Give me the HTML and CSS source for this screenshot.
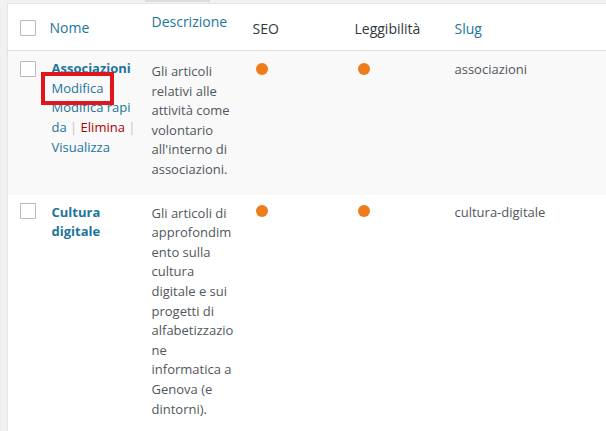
FILE: index.html
```html
<!DOCTYPE html>
<html lang="it">
<head>
<meta charset="utf-8">
<title>Categorie</title>
<link rel="stylesheet" href="styles.css">
</head>
<body>
<div class="topbar"><span class="tab-edge"></span></div>
<div class="wrap">
  <table class="list">
    <colgroup>
      <col class="c-check"><col class="c-name"><col class="c-desc"><col class="c-seo"><col class="c-read"><col class="c-slug">
    </colgroup>
    <thead>
      <tr class="head">
        <th class="check"><span class="box"></span></th>
        <th class="h-name"><a href="#">Nome</a></th>
        <th class="h-desc"><a href="#">Descrizione</a></th>
        <th class="h-seo">SEO</th>
        <th class="h-read">Leggibilità</th>
        <th class="h-slug"><a href="#">Slug</a></th>
      </tr>
    </thead>
    <tbody>
      <tr class="alt r1">
        <td class="check"><span class="box"></span></td>
        <td class="name">
          <a class="title" href="#">Associazioni</a>
          <div class="actions">
            <span class="edit-wrap"><a href="#">Modifica</a><span class="sep"> | </span><span class="mark"></span></span><a href="#">Modifica&nbsp;rapida</a><span class="sep"> | </span><a class="del" href="#">Elimina</a><span class="sep"> | </span><a href="#">Visualizza</a>
          </div>
        </td>
        <td class="desc">Gli articoli relativi alle attività come volontario all'interno di associazioni.</td>
        <td class="seo"><span class="dot"></span></td>
        <td class="read"><span class="dot"></span></td>
        <td class="slug">associazioni</td>
      </tr>
      <tr class="r2">
        <td class="check"><span class="box"></span></td>
        <td class="name"><a class="title" href="#">Cultura digitale</a></td>
        <td class="desc">Gli articoli di approfondimento sulla cultura digitale e sui progetti di alfabetizzazione informatica a Genova (e dintorni).</td>
        <td class="seo"><span class="dot"></span></td>
        <td class="read"><span class="dot"></span></td>
        <td class="slug">cultura-digitale</td>
      </tr>
    </tbody>
  </table>
</div>
</body>
</html>
```

FILE: styles.css
```css
html, body {
  margin: 0;
  padding: 0;
  background: #f1f1f1;
  overflow: hidden;
  font-family: "Open Sans", "Noto Sans", sans-serif;
  font-size: 13px;
  color: #32373c;
}
.topbar {
  height: 3px;
  position: relative;
}
.tab-edge {
  position: absolute;
  left: 145px;
  top: 0;
  width: 65px;
  height: 2px;
  background: #dcdcdc;
}
.wrap {
  padding-left: 7px;
}
.list {
  width: 640px;
  border-collapse: collapse;
  table-layout: fixed;
  background: #fff;
  border: 1px solid #e5e5e5;
}
.c-check { width: 34px; }
.c-name { width: 100px; }
.c-desc { width: 101px; }
.c-seo { width: 102px; }
.c-read { width: 100px; }
.c-slug { width: auto; }
a { color: #21759b; text-decoration: none; }
.head { height: 47px; }
th {
  text-align: left;
  font-weight: 400;
  font-size: 14px;
  padding: 0 10px;
  vertical-align: top;
  border-bottom: 1px solid #e1e1e1;
  line-height: 20px;
}
th.check { padding: 16px 0 0 12px; }
.h-name { padding-top: 14px; padding-left: 8px; }
.h-desc { padding-top: 8px; }
.h-seo, .h-read, .h-slug { padding-top: 15px; }
.h-seo, .h-read { color: #32373c; }
.box {
  display: block;
  width: 14px;
  height: 14px;
  border: 1px solid #b4b9be;
  background: #fff;
  border-radius: 1px;
}
td {
  vertical-align: top;
  padding: 8px 10px;
  line-height: 19.6px;
}
td.check { padding: 10px 0 0 12px; }
td.name { padding-right: 6px; overflow-wrap: break-word; word-break: break-word; }
.alt { background: #f9f9f9; }
.title { font-weight: 700; font-size: 13px; }
.actions { padding-top: 0; line-height: 19.7px; }
.edit-wrap { position: relative; }
.mark {
  position: absolute;
  left: -11px;
  top: -7px;
  width: 65px;
  height: 25px;
  border: 4px solid #e0161e;
}
.sep { color: #c3c4c7; }
.del { color: #a00; }
.desc { color: #50575e; padding-right: 6px; overflow-wrap: break-word; word-break: break-word; }
.slug { color: #50575e; }
.dot {
  display: block;
  width: 12px;
  height: 12px;
  border-radius: 50%;
  background: #ee7c1b;
  margin: 2px 0 0 3px;
}
.r1 .name { padding-top: 8px; }
.r1 .desc { padding-top: 11px; padding-bottom: 15px; }
.r1 .slug { padding-top: 9px; }
.r1 td.check { padding-top: 10px; }
.r1 .dot { margin-top: 4px; }
.r2 td { padding-top: 8px; }
.r2 td.check { padding-top: 8px; }
.r2 .desc { padding-top: 9px; padding-bottom: 40px; }
.r2 .dot { margin-top: 2px; }
```
